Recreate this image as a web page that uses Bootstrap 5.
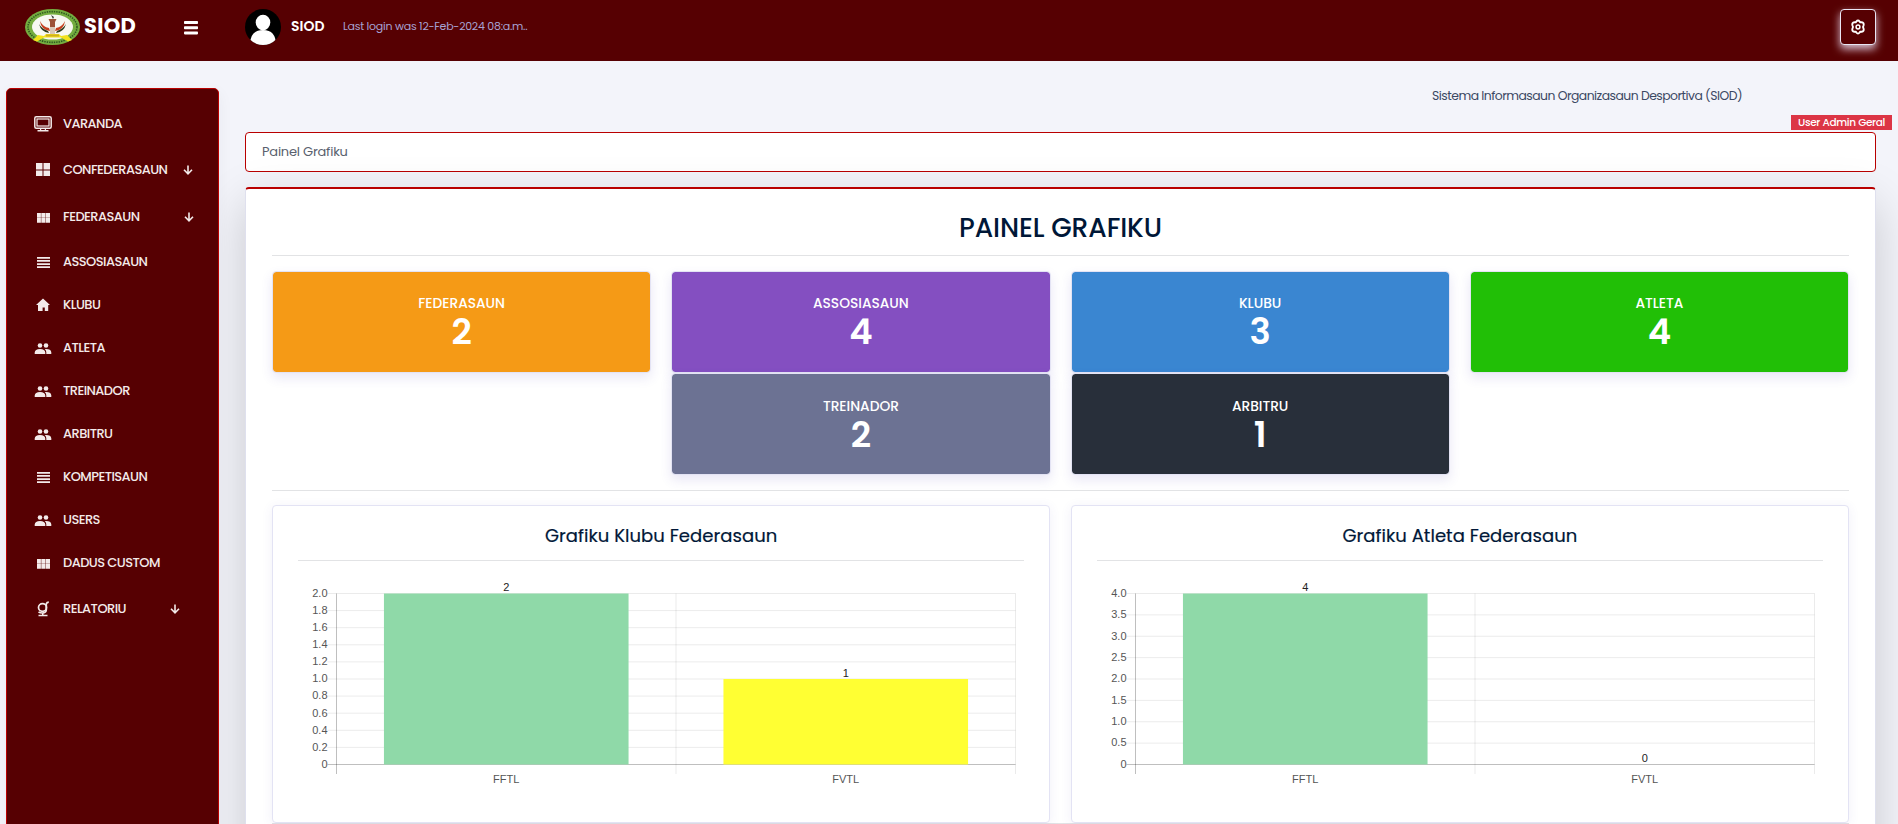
<!DOCTYPE html>
<html lang="pt">
<head>
<meta charset="utf-8">
<title>SIOD - Painel Grafiku</title>
<meta name="viewport" content="width=device-width, initial-scale=1">
<link href="https://cdn.jsdelivr.net/npm/bootstrap@5.3.0/dist/css/bootstrap.min.css" rel="stylesheet">
<style>
  :root { --maroon:#560002; --red:#b90000; --line:#e3e3f4; --ink:#001737; }
  body { font-family:Poppins,Inter,"Open Sans",sans-serif; background:#f3f4fa; height:100vh; overflow:hidden; font-size:13px; line-height:1.5; }
  .t { white-space:nowrap; display:inline-block; }
  .topbar { height:61px; background:var(--maroon); padding:9px 22px 0 25px; }
  .brand-name { font-size:21px; font-weight:700; margin-left:4px; line-height:33px; width:53px; letter-spacing:.3px; }
  .burger { width:14px; margin-left:47px; margin-top:12px; }
  .avatar { margin-left:47px; }
  .user-name { font-size:14px; font-weight:600; margin-left:10px; line-height:35px; width:34px; }
  .last-login { font-size:11px; color:#a7a3d4; margin-left:18px; line-height:35px; letter-spacing:-.25px; }
  .gear { width:36px; height:36px; border:1px solid #e9e5f3; border-radius:4px; box-shadow:0 4px 9px rgba(240,230,250,.85); background:var(--maroon); }
  .sidebar { width:213px; margin:27px 0 0 6px; height:760px; background:var(--maroon); border:1px solid var(--red); border-radius:5px; padding-top:13px; box-shadow:0 5px 16px rgba(8,21,66,.05); position:relative; z-index:1; }
  .item { height:43px; padding-left:26px; color:#f3eaea; font-size:13px; font-weight:500; letter-spacing:-.56px; }
  .item .ico { width:20px; margin-right:10px; flex:none; }
  .item.sub { height:47px; }
  .item:not(.sub) + .item.sub { margin-top:1px; }
  .content-area { margin-left:26px; width:1647px; flex:none; }
  .strip { height:54px; padding-top:25px; padding-right:150px; color:#3b4863; }
  .strip .t { font-size:12.4px; letter-spacing:-.53px; }
  .role { background:#dc3545; color:#fff; font-size:10.5px; font-weight:500; width:101px; height:15px; line-height:15px; text-align:center; }
  .role .t { letter-spacing:-.33px; }
  .crumb { width:1631px; height:40px; margin-top:2px; border:1px solid var(--red); border-radius:4px; background:#fff; padding:0 16px; line-height:38px; color:#59616e; letter-spacing:-.22px; }
  .panel { width:1631px; margin-top:15px; border:1px solid #dfe0ee; border-top:2px solid var(--red); border-radius:4px; background:#fff; padding:18px 26px 40px; box-shadow:0 16px 48px rgba(0,0,0,.175); }
  .panel h1 { font-size:26.5px; font-weight:500; color:var(--ink); margin:0; line-height:42px; height:48px; letter-spacing:-.1px; }
  .rule { height:1px; background:#e2e3e5; }
  .tiles { --bs-gutter-x:20px; margin-top:15px; margin-bottom:15px; }
  .tile { border:1px solid var(--line); border-radius:4px; height:102px; color:#fff; box-shadow:0 5px 12px rgba(72,60,180,.12); padding-top:22px; text-align:center; background-clip:padding-box; }
  .tiles > :nth-child(n+5) .tile { padding-top:23px; }
  .tile .cap { font-size:13.8px; font-weight:500; line-height:20px; letter-spacing:-.03px; }
  .tile .num { font-size:35.5px; font-weight:600; line-height:36px; }
  .charts { --bs-gutter-x:20.5px; margin-top:14px; }
  .chart-card { border:1px solid var(--line); border-radius:4px; height:318px; padding:17px 25px 0; box-shadow:0 2px 12px rgba(72,60,180,.08); background:#fff; }
  .chart-card h2 { font-size:18px; font-weight:400; color:var(--ink); margin:0; height:37px; line-height:25px; letter-spacing:.05px; -webkit-text-stroke:.2px var(--ink); }
  .chart-card svg { display:block; margin-top:9px; }
</style>
</head>
<body>
<header class="topbar d-flex align-items-start text-white">
  <svg width="55" height="36" viewBox="0 0 55 36">
    <ellipse cx="27.5" cy="18" rx="27.5" ry="18" fill="#74ad40"/>
    <ellipse cx="27.5" cy="18" rx="24.5" ry="15.4" fill="none" stroke="#2f5a20" stroke-width="1.6" stroke-dasharray="1.4 1"/>
    <ellipse cx="27.5" cy="18" rx="20.5" ry="12.6" fill="#f7f8f2"/>
    <path d="M15 12q1 9 10 10l-1-3q-6-1-9-7zM40 12q-1 9-10 10l1-3q6-1 9-7z" fill="#c5401f"/>
    <path d="M14 15q2 8 10 9l-1-2q-6-2-9-7zM41 15q-2 8-10 9l1-2q6-2 9-7z" fill="#2b3a1c"/>
    <path d="M23.500 10h8l-1.500 3v5h-5v-5z" fill="#9c5237"/><path d="M25 18h5v7h-5z" fill="#d9c9b8"/>
    <path d="M26 6l3 2-1 2z" fill="#333"/>
    <path d="M8 31l5-5 6 1 2-2h13l2 2 6-1 5 5-4 1.500-7-4H19l-7 4z" fill="#f2e21b"/>
    <path d="M21 25.500h13v2H21z" fill="#cfae20"/>
  </svg>
  <span class="brand-name t">SIOD</span>
  <svg class="burger" width="14" height="14" viewBox="0 0 14 14" fill="#fff"><rect width="14" height="3" rx=".8"/><rect y="5.200" width="14" height="3" rx=".8"/><rect y="10.400" width="14" height="3" rx=".8"/></svg>
  <svg class="avatar" width="36" height="36" viewBox="0 0 36 36"><defs><clipPath id="av"><circle cx="18" cy="18" r="18"/></clipPath></defs><g clip-path="url(#av)"><rect width="36" height="36"/><ellipse cx="18" cy="13.500" rx="7.300" ry="7.800" fill="#fff"/><path d="M5 36q0-15 13-15t13 15z" fill="#fff"/></g></svg>
  <span class="user-name t">SIOD</span>
  <span class="last-login t">Last login was 12-Feb-2024 08:a.m..</span>
  <a class="gear ms-auto d-flex align-items-center justify-content-center" href="#"><svg width="16" height="16" viewBox="0 0 16 16" fill="none" stroke="#fff"><path stroke-width="1.900" stroke-linejoin="round" d="M6.300 2.500Q8 .4 9.700 2.500L10.300 3.400 11.700 3.300Q14.300 3.700 13.600 6.200L13 8l.6 1.800q.7 2.500-1.900 2.900l-1.400-.1-.6.900q-1.700 2.100-3.400 0l-.6-.9-1.400.1Q1.700 12.300 2.400 9.800L3 8l-.6-1.800Q1.700 3.700 4.300 3.300l1.400.1z"/><circle cx="8" cy="8" r="1.900" stroke-width="1.500"/></svg></a>
</header>

<svg class="d-none">
  <symbol id="i-pc" viewBox="0 0 18 16"><rect x=".8" y=".8" width="16.400" height="11.400" rx="1.500" fill="none" stroke="currentColor" stroke-width="1.500"/><rect x="3" y="3" width="12" height="7" fill="none" stroke="currentColor" stroke-width="1.200"/><path d="M6 12h1.200v2H6zM10.800 12H12v2h-1.200zM3.500 14h11v1.500h-11z"/></symbol>
  <symbol id="i-win" viewBox="0 0 18 16"><path d="M2 1h6.500v6.500H2zM9.500 1H16v6.500H9.500zM2 8.500h6.500V14H2zM9.500 8.500H16V14H9.500z"/></symbol>
  <symbol id="i-mod" viewBox="0 0 18 16"><path d="M3 4h3.900v4.700H3zM7.300 4h4v4.700h-4zM11.700 4h4.300v4.700h-4.300zM3 9.100h3.900v4.600H3zM7.300 9.100h4v4.600h-4zM11.700 9.100h4.300v4.600h-4.300z"/></symbol>
  <symbol id="i-list" viewBox="0 0 18 16"><path d="M3 3h13v1.700H3zM3 6.100h13v1.700H3zM3 9.200h13v1.700H3zM3 12.300h13v1.700H3z"/></symbol>
  <symbol id="i-home" viewBox="0 0 18 16"><path d="M9 1.500L16 8h-1.800v6h-3.400v-3.600H8.600V14H4V8H2z"/></symbol>
  <symbol id="i-ppl" viewBox="0 0 18 16"><circle cx="6" cy="5.500" r="2.300"/><circle cx="12" cy="5.500" r="2.300"/><path d="M.7 14v-1.500Q1 9 6 9t5.300 3.500V14zM12.300 14v-1.700q-.1-2-1.500-3.200 6-.5 6.500 3.200V14z"/></symbol>
  <symbol id="i-g" viewBox="0 0 18 16"><g fill="none" stroke="currentColor" stroke-width="1.700"><ellipse cx="8.500" cy="6.500" rx="4" ry="3.900"/><path d="M12.300 2.500v6.500q-.3 3-3.800 3-2.500 0-4-1.200M12 3.200q1-2 2.800-2"/></g><path d="M8 12h1.500v1.700H8zM4.500 13.700h9v1.500h-9z"/></symbol>
  <symbol id="i-down" viewBox="0 0 10 10"><path d="M5 .5v8M1 4.800l4 4 4-4" fill="none" stroke="currentColor" stroke-width="1.600"/></symbol>
</svg>

<div class="d-flex align-items-start">
  <nav class="sidebar" id="side"></nav>
  <main class="content-area">
    <div class="strip text-end"><span class="t">Sistema Informasaun Organizasaun Desportiva (SIOD)</span></div>
    <div class="role ms-auto"><span class="t">User Admin Geral</span></div>
    <div class="crumb"><span class="t">Painel Grafiku</span></div>
    <section class="panel">
      <h1 class="text-center">PAINEL GRAFIKU</h1>
      <div class="rule"></div>
      <div class="row tiles justify-content-center">
        <div class="col-3"><div class="tile" style="background-color:#f59a16"><div class="cap">FEDERASAUN</div><div class="num">2</div></div></div>
        <div class="col-3"><div class="tile" style="background-color:#844fc1"><div class="cap">ASSOSIASAUN</div><div class="num">4</div></div></div>
        <div class="col-3"><div class="tile" style="background-color:#3a86d1"><div class="cap">KLUBU</div><div class="num">3</div></div></div>
        <div class="col-3"><div class="tile" style="background-color:#21bf06"><div class="cap">ATLETA</div><div class="num">4</div></div></div>
        <div class="col-3"><div class="tile" style="background-color:#6c7293"><div class="cap">TREINADOR</div><div class="num">2</div></div></div>
        <div class="col-3"><div class="tile" style="background-color:#282f3a"><div class="cap">ARBITRU</div><div class="num">1</div></div></div>
      </div>
      <div class="rule"></div>
      <div class="row charts">
        <div class="col-6"><div class="chart-card"><h2 class="text-center">Grafiku Klubu Federasaun</h2><div class="rule"></div><svg id="c1" width="726" height="235"></svg></div></div>
        <div class="col-6"><div class="chart-card"><h2 class="text-center">Grafiku Atleta Federasaun</h2><div class="rule"></div><svg id="c2" width="726" height="235"></svg></div></div>
      </div>
      <div class="rule"></div>
    </section>
  </main>
</div>
<script src="https://cdn.jsdelivr.net/npm/bootstrap@5.3.0/dist/js/bootstrap.bundle.min.js"></script>
<script>
  // [icon, label, gap before the arrow for entries with a submenu]
  const menu = [
    ['pc','VARANDA'],['win','CONFEDERASAUN',16],['mod','FEDERASAUN',45],['list','ASSOSIASAUN'],
    ['home','KLUBU'],['ppl','ATLETA'],['ppl','TREINADOR'],['ppl','ARBITRU'],['list','KOMPETISAUN'],
    ['ppl','USERS'],['mod','DADUS CUSTOM'],['g','RELATORIU',44.5]];
  document.getElementById('side').innerHTML = menu.map(m =>
    `<a class="item d-flex align-items-center text-decoration-none ${m[2] ? 'sub' : ''}" href="#"><svg class="ico" width="18" height="16" fill="currentColor"><use href="#i-${m[0]}"/></svg><span class="t">${m[1]}</span>${m[2] ? `<svg style="margin-left:${m[2]}px" width="10" height="10"><use href="#i-down"/></svg>` : ''}</a>`).join('');

  // Bar chart: value axis on the left, one category per half of the plot
  function bars(id, max, step, values) {
    const L = 38.5, R = 717.5, T = 23.5, B = 194.5, colors = ['#8fd9a8', '#ffff33'];
    let s = '';
    for (let v = 0; v <= max + 1e-6; v += step) {
      const y = B - (B - T) * v / max;
      s += `<path d="M29.500 ${y}H${R}" stroke="rgba(0,0,0,${v ? .08 : .25})"/><text x="29.500" y="${y + 3.3}" text-anchor="end" fill="#555">${v ? v.toFixed(1) : 0}</text>`;
    }
    [L, 378, R].forEach((x, i) => s += `<path d="M${x} ${T}V204" stroke="rgba(0,0,0,${i ? .08 : .25})"/>`);
    values.forEach((v, i) => {
      const c = L + (R - L) * (i + .5) / 2, h = (B - T) * v / max;
      if (v) s += `<rect x="${c - 122.3}" y="${B - h}" width="244.600" height="${h}" fill="${colors[i]}"/>`;
      s += `<text x="${c}" y="${B - h - 2.5}" text-anchor="middle" fill="#222">${v}</text><text x="${c}" y="213" text-anchor="middle" fill="#555">${['FFTL','FVTL'][i]}</text>`;
    });
    document.getElementById(id).innerHTML = `<g font-family="Liberation Sans, Arial, sans-serif" font-size="11">${s}</g>`;
  }
  bars('c1', 2, .2, [2, 1]);
  bars('c2', 4, .5, [4, 0]);
</script>
</body>
</html>
